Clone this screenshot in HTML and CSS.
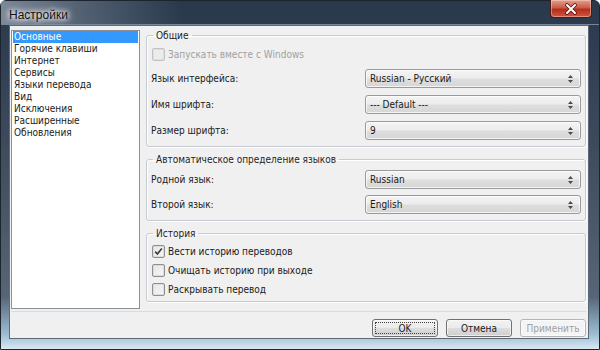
FILE: index.html
```html
<!DOCTYPE html>
<html lang="ru">
<head>
  <meta charset="UTF-8">
  <title>Настройки</title>
  <link rel="stylesheet" href="styles.css">
</head>
<body>

  <div class="window">
    <div class="titlebar">
      <span class="title">Настройки</span>
      <button class="close-button">
        <svg width="14" height="12" viewBox="0 0 14 12">
          <path d="M3 2 L11 10 M11 2 L3 10" stroke="#5a1414" stroke-width="3.6" stroke-linecap="round"/>
          <path d="M3 2 L11 10 M11 2 L3 10" stroke="#fff" stroke-width="2" stroke-linecap="round"/>
        </svg>
      </button>
    </div>

    <div class="client">
      <div class="main">
        <ul class="page-list">
          <li class="selected">Основные</li>
          <li>Горячие клавиши</li>
          <li>Интернет</li>
          <li>Сервисы</li>
          <li>Языки перевода</li>
          <li>Вид</li>
          <li>Исключения</li>
          <li>Расширенные</li>
          <li>Обновления</li>
        </ul>

        <div class="panel">
          <fieldset class="group group-general">
            <legend>Общие</legend>
            <label class="check disabled"><span class="box"></span>Запускать вместе с Windows</label>
            <div class="row">
              <span class="label">Язык интерфейса:</span>
              <div class="combo"><span>Russian - Русский</span><svg width="5" height="8" viewBox="0 0 5 8"><path d="M0 3 L2.5 0 L5 3 Z M0 5 L2.5 8 L5 5 Z" fill="#4a4a4a"/></svg></div>
            </div>
            <div class="row">
              <span class="label">Имя шрифта:</span>
              <div class="combo"><span>--- Default ---</span><svg width="5" height="8" viewBox="0 0 5 8"><path d="M0 3 L2.5 0 L5 3 Z M0 5 L2.5 8 L5 5 Z" fill="#4a4a4a"/></svg></div>
            </div>
            <div class="row">
              <span class="label">Размер шрифта:</span>
              <div class="combo"><span>9</span><svg width="5" height="8" viewBox="0 0 5 8"><path d="M0 3 L2.5 0 L5 3 Z M0 5 L2.5 8 L5 5 Z" fill="#4a4a4a"/></svg></div>
            </div>
          </fieldset>

          <fieldset class="group group-detect">
            <legend>Автоматическое определение языков</legend>
            <div class="row">
              <span class="label">Родной язык:</span>
              <div class="combo"><span>Russian</span><svg width="5" height="8" viewBox="0 0 5 8"><path d="M0 3 L2.5 0 L5 3 Z M0 5 L2.5 8 L5 5 Z" fill="#4a4a4a"/></svg></div>
            </div>
            <div class="row">
              <span class="label">Второй язык:</span>
              <div class="combo"><span>English</span><svg width="5" height="8" viewBox="0 0 5 8"><path d="M0 3 L2.5 0 L5 3 Z M0 5 L2.5 8 L5 5 Z" fill="#4a4a4a"/></svg></div>
            </div>
          </fieldset>

          <fieldset class="group group-history">
            <legend>История</legend>
            <label class="check">
              <span class="box"><svg width="11" height="11" viewBox="0 0 11 11"><path d="M2.2 5.6 L4.4 8 L8.8 2.6" fill="none" stroke="#3a3a3a" stroke-width="1.6"/></svg></span>Вести историю переводов
            </label>
            <label class="check"><span class="box"></span>Очищать историю при выходе</label>
            <label class="check"><span class="box"></span>Раскрывать перевод</label>
          </fieldset>
        </div>
      </div>

      <div class="actions">
        <button class="btn default"><span class="focus">OK</span></button>
        <button class="btn">Отмена</button>
        <button class="btn" disabled>Применить</button>
      </div>
    </div>
  </div>

</body>
</html>
```

FILE: styles.css
```css
body {
  margin: 0;
  padding: 0;
  background: #fff;
  font-family: 'DejaVu Sans Condensed', 'Liberation Sans', Arial, sans-serif;
  font-size: 10px;
  color: #1a1a1a;
}

.window {
  width: 600px;
  height: 350px;
  box-sizing: border-box;
  padding: 0 10px 10px 8px;
  background: linear-gradient(180deg, #2a384c 0%, #3c4a5c 40%, #566676 85%, #9fbfd6 96%, #d8e8f2 100%);
  border: 1px solid #1c2430;
  border-radius: 6px 6px 0 0;
  display: flex;
  flex-direction: column;
}

.titlebar {
  height: 25px;
  display: flex;
  align-items: flex-start;
  justify-content: space-between;
  background: linear-gradient(90deg, rgba(190,200,210,0.55) 0%, rgba(150,165,180,0.35) 14%, rgba(0,0,0,0) 30%);
  margin: 0 -10px 0 -8px;
  padding: 0 7px 0 8px;
  border-bottom: 1px solid #75879a;
}

.title {
  font-family: 'Liberation Sans', Arial, sans-serif;
  font-size: 12px;
  line-height: 12px;
  margin-top: 8px;
  color: #111;
  text-shadow: 0 0 6px #fff, 0 0 10px #fff, 0 0 4px #eef;
}

.close-button {
  width: 42px;
  height: 18px;
  margin-top: -1px;
  padding: 0;
  border: 1px solid #4a1a16;
  border-top: none;
  border-radius: 0 0 4px 4px;
  background: linear-gradient(180deg, #e3a08f 0%, #cc5a48 45%, #b32e1c 55%, #d2573c 100%);
  box-shadow: inset 0 0 0 1px rgba(255,220,210,0.45);
  display: flex;
  align-items: center;
  justify-content: center;
}

.client {
  flex: 1;
  background: #f0f0f0;
  border: 1px solid #5d6a78;
  padding: 3px 2px 1px 1px;
  display: flex;
  flex-direction: column;
}

.main {
  height: 280px;
  display: flex;
  gap: 6px;
}

.page-list {
  list-style: none;
  margin: 1px 0 0 0;
  padding: 0;
  width: 129px;
  box-sizing: border-box;
  background: #fff;
  border: 1px solid #8a9097;
}

.page-list li {
  height: 12px;
  line-height: 12px;
  padding-left: 1px;
  margin: 0 1px;
  white-space: nowrap;
}

.page-list li.selected {
  background: #3399ff;
  color: #fff;
}

.panel {
  flex: 1;
  display: flex;
  flex-direction: column;
}

.group {
  margin: 0;
  padding: 6px 4px 6px 4px;
  border: 1px solid #c5cbd0;
  border-radius: 3px;
  box-shadow: inset 1px 1px 0 #fff, 1px 1px 0 #fff;
  display: flex;
  flex-direction: column;
}

.group legend {
  padding: 0 3px;
  margin-left: 2px;
  line-height: 13px;
  color: #1e1e1e;
}

.group-general {
  gap: 7px;
}

.group-general .check {
  margin-bottom: 1px;
}

.group-detect {
  margin-top: 6px;
  padding-top: 4px;
  gap: 6px;
}

.group-history {
  margin-top: 6px;
  padding-top: 5px;
  padding-bottom: 5px;
  gap: 6px;
}

.row {
  height: 19px;
  display: flex;
  align-items: center;
}

.row .label {
  flex: 1;
}

.combo {
  width: 216px;
  height: 19px;
  box-sizing: border-box;
  border: 1px solid #9a9a9a;
  border-radius: 3px;
  background: linear-gradient(180deg, #f4f4f4 0%, #ececec 48%, #dedede 52%, #d6d6d6 100%);
  box-shadow: inset 0 0 0 1px rgba(255,255,255,0.7);
  display: flex;
  align-items: center;
  justify-content: space-between;
  padding: 0 7px 0 4px;
}

.check {
  height: 13px;
  display: flex;
  align-items: center;
  gap: 3px;
  padding-left: 1px;
}

.check .box {
  width: 11px;
  height: 11px;
  border: 1px solid #8e8f8f;
  border-radius: 2px;
  background: linear-gradient(135deg, #e6e6e6 0%, #f6f6f6 100%);
  box-shadow: inset 0 0 0 1px #dcdcdc;
  display: flex;
  align-items: center;
  justify-content: center;
}

.check.disabled {
  color: #a0a0a0;
}

.check.disabled .box {
  border-color: #c2c2c2;
  background: #ececec;
  box-shadow: inset 0 0 0 1px #e0e0e0;
}

.actions {
  margin-top: 2px;
  padding-top: 7px;
  border-top: 1px solid #dadada;
  display: flex;
  justify-content: flex-end;
  gap: 8px;
}

.btn {
  width: 66px;
  height: 18px;
  padding: 0;
  font-family: inherit;
  font-size: 10px;
  color: #1a1a1a;
  border: 1px solid #707070;
  border-radius: 3px;
  background: linear-gradient(180deg, #f2f2f2 0%, #ebebeb 48%, #dddddd 52%, #cfcfcf 100%);
  box-shadow: inset 0 0 0 1px rgba(255,255,255,0.6);
}

.btn.default {
  padding: 2px;
}

.btn .focus {
  display: block;
  height: 100%;
  line-height: 12px;
  border: 1px dotted #444;
  box-sizing: border-box;
}

.btn:disabled {
  color: #a0a0a0;
  border-color: #b5b5b5;
  background: #f4f4f4;
}
```
